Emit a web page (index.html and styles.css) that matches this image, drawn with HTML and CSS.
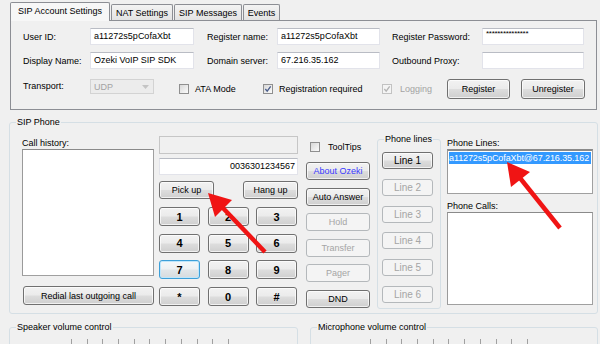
FILE: index.html
```html
<!DOCTYPE html>
<html lang="en">
  <head>
    <meta charset="UTF-8" />
    <title>Ozeki VoIP SIP SDK - SIP Phone</title>
    <link rel="stylesheet" href="styles.css">
  </head>
  <body>
    <div class="tabs">
      <div class="tab active">SIP Account Settings</div>
      <div class="tab tab-nat">NAT Settings</div>
      <div class="tab tab-msg">SIP Messages</div>
      <div class="tab tab-events">Events</div>
    </div>

    <div class="panel">
      <div class="acct-grid">
        <span>User ID:</span>
        <div class="input">a11272s5pCofaXbt</div>
        <span></span>
        <span>Register name:</span>
        <div class="input">a11272s5pCofaXbt</div>
        <span></span>
        <span>Register Password:</span>
        <div class="input pwd">***************</div>

        <span>Display Name:</span>
        <div class="input">Ozeki VoIP SIP SDK</div>
        <span></span>
        <span>Domain server:</span>
        <div class="input">67.216.35.162</div>
        <span></span>
        <span>Outbound Proxy:</span>
        <div class="input"></div>
      </div>

      <div class="acct-row3">
        <span class="transport-label">Transport:</span>
        <div class="combo">
          <span>UDP</span>
          <svg viewBox="0 0 7 4" width="7" height="4"><polygon points="0,0 7,0 3.5,4" fill="#c4c4c4" /></svg>
        </div>
        <label class="check check-ata"><span class="cb"></span>ATA Mode</label>
        <label class="check check-reg">
          <span class="cb"><svg viewBox="0 0 9 9"><path d="M1.5 4.5 L3.6 7 L7.5 1.5" /></svg></span>
          Registration required
        </label>
        <label class="check check-log disabled">
          <span class="cb"><svg viewBox="0 0 9 9"><path d="M1.5 4.5 L3.6 7 L7.5 1.5" /></svg></span>
          Logging
        </label>
        <button class="btn btn-register">Register</button>
        <button class="btn btn-unregister">Unregister</button>
      </div>
    </div>

    <div class="group sip-phone">
      <span class="group-title">SIP Phone</span>

      <div class="col-history">
        <div class="field-label">Call history:</div>
        <div class="listbox history-list"></div>
        <button class="btn redial">Redial last outgoing call</button>
      </div>

      <div class="col-dial">
        <div class="dial-display"></div>
        <div class="input dial-number">0036301234567</div>
        <div class="call-buttons">
          <button class="btn call-btn">Pick up</button>
          <button class="btn call-btn">Hang up</button>
        </div>
        <div class="keypad">
          <button class="btn key">1</button>
          <button class="btn key">2</button>
          <button class="btn key">3</button>
          <button class="btn key">4</button>
          <button class="btn key">5</button>
          <button class="btn key">6</button>
          <button class="btn key focused">7</button>
          <button class="btn key">8</button>
          <button class="btn key">9</button>
          <button class="btn key">*</button>
          <button class="btn key">0</button>
          <button class="btn key">#</button>
        </div>
      </div>

      <div class="col-actions">
        <label class="check tooltips"><span class="cb"></span>ToolTips</label>
        <div class="action-list">
          <button class="btn action about">About Ozeki</button>
          <button class="btn action">Auto Answer</button>
          <button class="btn action" disabled>Hold</button>
          <button class="btn action" disabled>Transfer</button>
          <button class="btn action" disabled>Pager</button>
          <button class="btn action">DND</button>
        </div>
      </div>

      <div class="group lines-group">
        <span class="group-title">Phone lines</span>
        <button class="btn line">Line 1</button>
        <button class="btn line" disabled>Line 2</button>
        <button class="btn line" disabled>Line 3</button>
        <button class="btn line" disabled>Line 4</button>
        <button class="btn line" disabled>Line 5</button>
        <button class="btn line" disabled>Line 6</button>
      </div>

      <div class="col-lists">
        <div class="field-label">Phone Lines:</div>
        <div class="listbox lines-list">
          <div class="line-item">a11272s5pCofaXbt@67.216.35.162</div>
        </div>
        <div class="field-label calls-label">Phone Calls:</div>
        <div class="listbox calls-list"></div>
      </div>
    </div>

    <div class="volume-row">
      <div class="group volume speaker">
        <span class="group-title">Speaker volume control</span>
        <div class="ticks">
          <i></i><i></i><i></i><i></i><i></i><i></i><i></i><i></i><i></i><i></i><i></i>
        </div>
      </div>
      <div class="group volume mic">
        <span class="group-title">Microphone volume control</span>
        <div class="ticks">
          <i></i><i></i><i></i><i></i><i></i><i></i><i></i><i></i><i></i><i></i><i></i>
        </div>
      </div>
    </div>

    <!-- red call-out arrows drawn over the form -->
    <svg class="arrows" viewBox="0 0 600 344" width="600" height="344">
      <line x1="265" y1="252" x2="222" y2="207" />
      <polygon points="208,193 232,200 215,217" />
      <line x1="560" y1="228" x2="520" y2="178" />
      <polygon points="507,162 530,172 511,187" />
    </svg>
  </body>
</html>
```

FILE: styles.css
```css
* {
  box-sizing: border-box;
}

body {
  margin: 0;
  width: 600px;
  height: 344px;
  overflow: hidden;
  position: relative;
  background: #f0f0f0;
  font-family: "Liberation Sans", Arial, sans-serif;
  font-size: 9px;
  color: #000;
}

/* tab strip */
.tabs {
  display: flex;
  align-items: flex-end;
  height: 20px;
  padding-left: 10px;
}

.tab {
  height: 16px;
  margin-left: 1px;
  border: 1px solid #8c8e94;
  border-bottom: none;
  border-radius: 2px 2px 0 0;
  background: linear-gradient(#f3f3f3, #e3e3e3);
  display: flex;
  align-items: center;
  justify-content: center;
  white-space: nowrap;
}

.tab.active {
  position: relative;
  width: 100px;
  height: 19px;
  margin-left: 0;
  margin-bottom: -1px;
  background: #f7f7f7;
  padding-bottom: 2px;
}

.tab-nat { width: 62px; }
.tab-msg { width: 68px; }
.tab-events { width: 37px; }

.panel {
  margin-left: 10px;
  width: 587px;
  height: 90px;
  border: 1px solid #8c8e94;
  padding: 7px 0 0 12px;
}

.acct-grid {
  display: grid;
  grid-template-columns: 67px 104px 13px 70px 103px 12px 90px 102px;
  grid-auto-rows: 17px;
  row-gap: 7px;
  align-items: center;
}

.input {
  height: 17px;
  background: #fff;
  border: 1px solid #e2e3ea;
  border-top-color: #b9bcc4;
  padding: 0 3px;
  line-height: 15px;
  white-space: nowrap;
  overflow: hidden;
}

.input.pwd {
  font-size: 8px;
  line-height: 9px;
  letter-spacing: -0.3px;
}

.acct-row3 {
  display: flex;
  align-items: center;
  height: 20px;
  margin-top: 10px;
}

.transport-label {
  width: 67px;
  align-self: flex-start;
  line-height: 15px;
}

.combo {
  align-self: flex-start;
  width: 64px;
  height: 15px;
  border: 1px solid #d3d3d3;
  background: #ececec;
  color: #a3a3a3;
  display: flex;
  align-items: center;
  justify-content: space-between;
  padding: 0 4px 0 3px;
}

.check {
  display: flex;
  align-items: center;
  gap: 6px;
  white-space: nowrap;
}

.check-ata { margin-left: 25px; width: 84px; }
.check-reg { width: 119px; }
.check-log { width: 65px; gap: 8px; }
.check.disabled { color: #a3a3a3; }

.cb {
  width: 10px;
  height: 10px;
  border: 1px solid #8f8f8f;
  background: linear-gradient(135deg, #d8d8d8, #fbfbfb);
  display: flex;
}

.cb svg {
  width: 8px;
  height: 8px;
}

.cb path {
  fill: none;
  stroke: #4b5e8c;
  stroke-width: 1.5;
}

.check.disabled .cb {
  border-color: #c2c2c2;
  background: #f4f4f4;
}

.check.disabled .cb path {
  stroke: #b4b4b4;
}

/* windows 7 style push buttons */
.btn {
  font: inherit;
  color: #000;
  padding: 0;
  border: 1px solid #707070;
  border-radius: 3px;
  background: linear-gradient(#f2f2f2 0%, #ebebeb 48%, #dddddd 52%, #cfcfcf 100%);
  box-shadow: inset 0 0 0 1px rgba(255, 255, 255, 0.7);
  white-space: nowrap;
}

.btn:disabled {
  border-color: #b4b8bb;
  background: #f4f4f4;
  color: #a5a5a5;
  box-shadow: none;
}

.btn-register { width: 63px; height: 20px; margin-right: 11px; }
.btn-unregister { width: 64px; height: 20px; }

/* group boxes */
.group {
  border: 1px solid #d5dfe5;
  border-radius: 3px;
  position: relative;
}

.group-title {
  position: absolute;
  top: -7px;
  left: 6px;
  padding: 0 1px;
  background: #f0f0f0;
  line-height: 12px;
  white-space: nowrap;
}

.sip-phone {
  margin: 12px 0 0 9px;
  width: 589px;
  height: 192px;
  display: flex;
  align-items: flex-start;
}

.field-label {
  height: 12px;
  line-height: 12px;
}

.listbox {
  background: #fff;
  border: 1px solid #a0a0a0;
  border-top-color: #8a8a8a;
  border-left-color: #9a9a9a;
}

.col-history {
  margin: 14px 0 0 12px;
  width: 132px;
}

.history-list { height: 127px; }

.redial {
  display: block;
  margin: 10px 0 0 1px;
  width: 131px;
  height: 19px;
}

.col-dial {
  margin: 13px 0 0 5px;
  width: 139px;
}

.dial-display {
  height: 18px;
  border: 1px solid #c6c6c6;
  background: #f0f0f0;
}

.dial-number {
  margin-top: 4px;
  text-align: right;
  padding-right: 2px;
}

.call-buttons {
  margin-top: 6px;
  display: flex;
  justify-content: space-between;
}

.call-btn {
  width: 55px;
  height: 18px;
}

.keypad {
  margin-top: 8px;
  display: grid;
  grid-template-columns: repeat(3, 41px);
  grid-auto-rows: 19px;
  column-gap: 7.5px;
  row-gap: 7.7px;
}

.key {
  font-size: 11px;
  font-weight: bold;
}

.key.focused {
  border-color: #3c9fd8;
  box-shadow: inset 0 0 0 1px #bfe6fb;
  background: linear-gradient(#f4f8fa 0%, #edf1f3 48%, #e1e6e9 52%, #d6dbde 100%);
}

.col-actions {
  margin-left: 8px;
  width: 64px;
}

.tooltips {
  margin: 18px 0 0 4px;
  height: 11px;
  gap: 8px;
}

.action-list {
  margin-top: 10px;
  display: flex;
  flex-direction: column;
  gap: 7.6px;
}

.action {
  height: 18px;
}

.action.about {
  color: #3a3aff;
}

.lines-group {
  margin: 16px 0 0 7px;
  width: 64px;
  height: 170px;
  padding: 12px 0 0 4px;
  display: flex;
  flex-direction: column;
  gap: 9.8px;
}

.line {
  width: 51px;
  height: 17px;
  font-size: 10px;
}

.col-lists {
  margin: 14px 0 0 6px;
  width: 146px;
}

.lines-list {
  height: 45px;
  padding: 1px;
  border-top-width: 2px;
}

.line-item {
  height: 12px;
  line-height: 12px;
  background: #3399ff;
  color: #fff;
  white-space: nowrap;
  overflow: hidden;
  font-size: 9px;
  letter-spacing: -0.1px;
}

.calls-label { margin-top: 6px; }

.calls-list { height: 93px; }

/* volume controls */
.volume-row {
  display: flex;
  margin: 13px 0 0 9px;
}

.volume {
  height: 30px;
}

.speaker { width: 289px; }
.mic { width: 288px; margin-left: 12px; }

.ticks {
  display: flex;
  justify-content: space-between;
  width: 158px;
  margin: 11px 0 0 61px;
}

.mic .ticks { margin-left: 59px; }

.ticks i {
  width: 1px;
  height: 6px;
  background: #a0a0a0;
}

.arrows {
  position: absolute;
  left: 0;
  top: 0;
  pointer-events: none;
}

.arrows line {
  stroke: #f01414;
  stroke-width: 4.5;
}

.arrows polygon {
  fill: #f01414;
}
```
